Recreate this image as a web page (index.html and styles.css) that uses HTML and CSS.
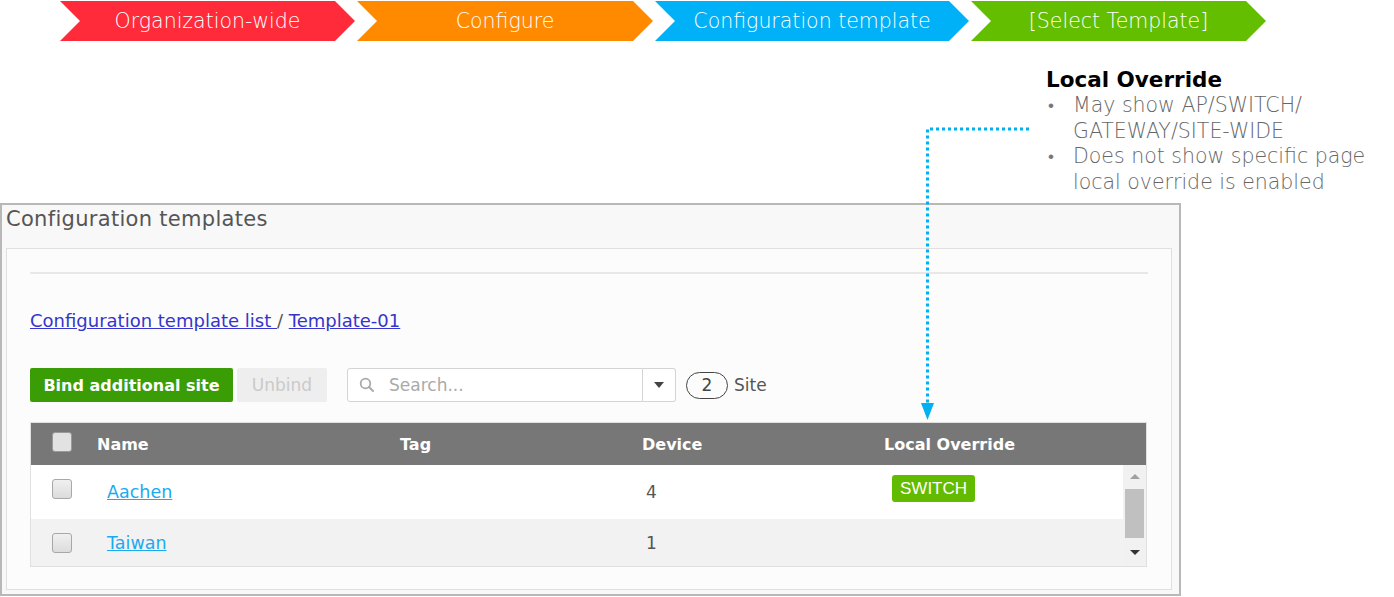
FILE: index.html
```html
<!DOCTYPE html>
<html lang="en">
<head>
    <meta charset="UTF-8" />
    <title>Configuration templates</title>
    <link rel="stylesheet" href="styles.css">
</head>
<body>

<div class="steps">
    <div class="step step-red">Organization-wide</div>
    <div class="step step-orange">Configure</div>
    <div class="step step-blue step-wide">Configuration template</div>
    <div class="step step-green">[Select Template]</div>
</div>

<div class="note">
    <div class="note-title">Local Override</div>
    <ul class="note-list">
        <li>May show AP/SWITCH/ GATEWAY/SITE-WIDE</li>
        <li>Does not show specific page local override is enabled</li>
    </ul>
</div>

<!-- dotted pointer from the note down to the column header -->
<svg class="pointer" width="120" height="310" viewBox="0 0 120 310">
    <path d="M110 8 H8.5 V284" fill="none" stroke="#00b0f0" stroke-width="3" stroke-dasharray="3 3" />
    <polygon points="2,282 15,282 8.5,299" fill="#00b0f0" />
</svg>

<div class="panel">
    <div class="panel-title">Configuration templates</div>
    <div class="panel-body">
        <div class="rule"></div>

        <div class="crumbs">
            <a href="#">Configuration template list </a> / <a href="#">Template-01</a>
        </div>

        <div class="toolbar">
            <button type="button" class="btn btn-green">Bind additional site</button>
            <button type="button" class="btn btn-off">Unbind</button>
            <div class="search">
                <svg class="search-icon" width="16" height="16" viewBox="0 0 16 16">
                    <circle cx="6.5" cy="6.5" r="4.8" fill="none" stroke="#aaa" stroke-width="1.8" />
                    <line x1="10" y1="10" x2="14" y2="14" stroke="#aaa" stroke-width="2" stroke-linecap="round" />
                </svg>
                <span class="search-text">Search...</span>
            </div>
            <div class="search-drop"><span class="caret"></span></div>
            <span class="count">2</span>
            <span class="count-label">Site</span>
        </div>

        <div class="table">
            <div class="thead">
                <div class="cell"><span class="check check-head"></span></div>
                <div class="cell">Name</div>
                <div class="cell">Tag</div>
                <div class="cell">Device</div>
                <div class="cell">Local Override</div>
            </div>
            <div class="tbody">
                <div class="rows">
                    <div class="row row-tall">
                        <div class="cell"><span class="check"></span></div>
                        <div class="cell"><a href="#" class="site">Aachen</a></div>
                        <div class="cell"></div>
                        <div class="cell num">4</div>
                        <div class="cell cell-tag"><span class="tag">SWITCH</span></div>
                    </div>
                    <div class="row row-alt">
                        <div class="cell"><span class="check"></span></div>
                        <div class="cell"><a href="#" class="site">Taiwan</a></div>
                        <div class="cell"></div>
                        <div class="cell num">1</div>
                        <div class="cell"></div>
                    </div>
                </div>
                <div class="scrollbar">
                    <span class="arrow-up"></span>
                    <span class="thumb"></span>
                    <span class="arrow-down"></span>
                </div>
            </div>
        </div>
    </div>
</div>

</body>
</html>
```

FILE: styles.css
```css
body {
    margin: 0;
    background: #fff;
    font-family: "DejaVu Sans", sans-serif;
    color: #555;
    position: relative;
}

/* breadcrumb arrows at the top */
.steps {
    display: flex;
    gap: 2px;
    padding: 1px 0 0 60px;
    height: 40px;
}
.step {
    width: 295px;
    height: 40px;
    line-height: 40px;
    text-align: center;
    color: #fff;
    font-family: "DejaVu Sans", sans-serif;
    font-weight: 200;
    font-size: 20.5px;
    clip-path: polygon(0 0, calc(100% - 20px) 0, 100% 50%, calc(100% - 20px) 100%, 0 100%, 20px 50%);
}
.step-wide { width: 314px; }
.step-red { background: #ff2b3b; }
.step-orange { background: #ff8a00; width: 296px; }
.step-blue { background: #00b1f7; }
.step-green { background: #64be00; }

/* side note */
.note {
    margin: 26px 0 0 1046px;
    height: 136px;
    font-family: "DejaVu Sans", sans-serif;
}
.note-title {
    font-size: 21.5px;
    font-weight: bold;
    color: #000;
    line-height: 26px;
}
.note-list {
    list-style: none;
    margin: 0;
    padding: 0 0 0 27px;
    width: 330px;
    font-size: 20.5px;
    font-weight: 200;
    line-height: 25.5px;
    color: #666;
}
.note-list li {
    position: relative;
}
.note-list li::before {
    content: "\2022";
    position: absolute;
    left: -25px;
    color: #777;
    font-size: 17px;
}

.pointer {
    position: absolute;
    left: 919px;
    top: 121px;
}

/* panel */
.panel {
    width: 1181px;
    border: 2px solid #b8b8b8;
    background: #f8f8f8;
    padding: 0 7px 4px 4px;
    box-sizing: border-box;
}
.panel-title {
    font-size: 21px;
    letter-spacing: 0.3px;
    line-height: 28px;
    padding: 0 0 15px 0;
    color: #555;
}
.panel-body {
    border: 1px solid #e0e0e0;
    background: #fcfcfc;
    padding: 23px 23px 22px 23px;
}
.rule {
    height: 2px;
    background: #e8e8e8;
}
.crumbs {
    margin-top: 36px;
    font-size: 18px;
    line-height: 22px;
    color: #555;
}
.crumbs a {
    color: #3535cc;
}

.toolbar {
    display: flex;
    align-items: center;
    margin-top: 36px;
    height: 34px;
}
.btn {
    height: 34px;
    border: none;
    border-radius: 2px;
    font-family: "DejaVu Sans", sans-serif;
    font-size: 16px;
    font-weight: bold;
    padding: 0;
}
.btn-green {
    width: 203px;
    background: #3b9d06;
    color: #fff;
}
.btn-off {
    width: 90px;
    margin-left: 4px;
    background: #eeeeee;
    color: #cacaca;
    font-size: 17px;
    font-weight: normal;
}
.search {
    display: flex;
    align-items: center;
    width: 296px;
    height: 34px;
    margin-left: 20px;
    border: 1px solid #d4d4d4;
    border-radius: 3px 0 0 3px;
    box-sizing: border-box;
    background: #fff;
}
.search-icon {
    margin-left: 11px;
}
.search-text {
    margin-left: 14px;
    font-size: 17px;
    color: #aaa;
}
.search-drop {
    width: 33px;
    height: 34px;
    border: 1px solid #d4d4d4;
    border-left: none;
    border-radius: 0 3px 3px 0;
    box-sizing: border-box;
    display: flex;
    align-items: center;
    justify-content: center;
    background: #fff;
}
.caret {
    width: 0;
    height: 0;
    border-left: 5px solid transparent;
    border-right: 5px solid transparent;
    border-top: 6px solid #444;
}
.count {
    margin-left: 10px;
    width: 42px;
    height: 27px;
    box-sizing: border-box;
    border: 1.5px solid #444;
    border-radius: 14px;
    text-align: center;
    line-height: 24px;
    font-size: 17px;
    color: #444;
}
.count-label {
    margin-left: 6px;
    font-size: 17px;
    color: #555;
}

/* table */
.table {
    margin-top: 20px;
    border: 1px solid #e0e0e0;
    width: 1117px;
    box-sizing: border-box;
}
.thead, .row {
    display: grid;
    grid-template-columns: 66px 303px 242px 242px 1fr;
    align-items: center;
}
.thead {
    height: 42px;
    background: #777;
    color: #fff;
    font-weight: bold;
    font-size: 16px;
}
.thead .cell:first-child,
.row .cell:first-child {
    padding-left: 21px;
    display: flex;
}
.tbody {
    display: flex;
    height: 101px;
    overflow: hidden;
}
.rows {
    flex: 1;
}
.row {
    height: 47px;
    font-size: 17px;
    background: #fff;
}
.row-tall { height: 54px; }
.row-alt { background: #f2f2f2; }
.site {
    margin-left: 10px;
    color: #1aaaf0;
    font-size: 17.5px;
}
.num {
    padding-left: 4px;
    color: #555;
}
.cell-tag {
    display: flex;
}
.tag {
    margin-left: 8px;
    margin-bottom: 8px;
    padding: 0 8px;
    height: 27px;
    line-height: 27px;
    background: #63bb00;
    color: #fff;
    border-radius: 3px;
    font-family: "Liberation Sans", Arial, sans-serif;
    font-size: 17px;
}
.check {
    width: 18px;
    height: 18px;
    border: 1px solid #a8a8a8;
    border-radius: 3px;
    background: linear-gradient(#f0f0f0, #dcdcdc);
}
.check-head {
    border-color: #999;
    background: #e2e2e2;
    margin-top: -4px;
}
.row .check { margin-top: -6px; }
.row-alt .check { margin-top: 0; }

.scrollbar {
    width: 23px;
    background: #f1f1f1;
    display: flex;
    flex-direction: column;
    align-items: center;
}
.arrow-up {
    margin-top: 9px;
    border-left: 5px solid transparent;
    border-right: 5px solid transparent;
    border-bottom: 5px solid #a0a0a0;
}
.thumb {
    margin-top: 10px;
    width: 19px;
    height: 49px;
    background: #c0c0c0;
}
.arrow-down {
    margin-top: 12px;
    border-left: 5px solid transparent;
    border-right: 5px solid transparent;
    border-top: 5px solid #333;
}
```
